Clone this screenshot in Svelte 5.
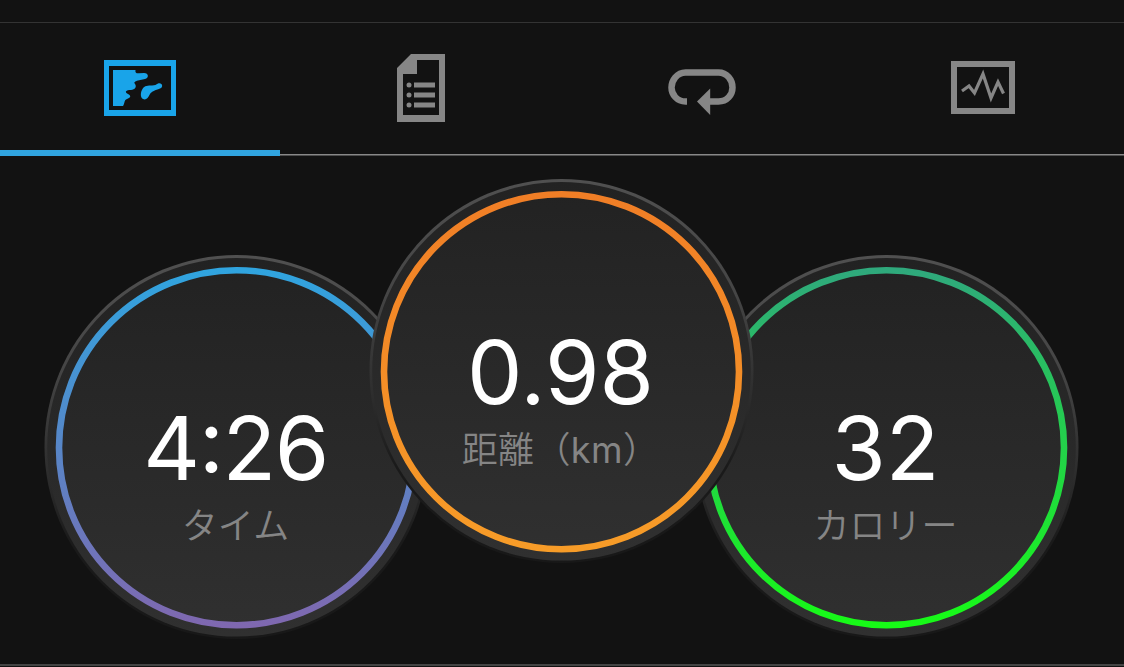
<script lang="ts">
	type Gauge = {
		id: string;
		value: string;
		label: string;
		from: string;
		to: string;
	};

	const tabs = ['map', 'details', 'laps', 'charts'];
	let activeTab = $state('map');

	const gauges: Gauge[] = [
		{ id: 'time', value: '4:26', label: 'タイム', from: '#30a4df', to: '#7f68b0' },
		{ id: 'distance', value: '0.98', label: '距離（km）', from: '#f07e26', to: '#f79c28' },
		{ id: 'calories', value: '32', label: 'カロリー', from: '#2fa97c', to: '#17fa17' }
	];

	// latin units and the colon are styled apart from the text around them
	function split(text: string, pattern: RegExp): string[] {
		return text.split(pattern).filter(Boolean);
	}
</script>

<div class="screen">
	<nav class="tabs">
		{#each tabs as tab (tab)}
			<button
				type="button"
				class="tab {tab}"
				class:active={activeTab === tab}
				aria-label={tab}
				onclick={() => (activeTab = tab)}
			>
				{#if tab === 'map'}
					<svg width="72" height="56" viewBox="0 0 72 56">
						<path d="M0 0h72v56H0zM5 6v44h62V6z" fill="currentColor" fill-rule="evenodd" />
						<path
							d="M9 10H31.500C31 12.500 32 13.500 35 13.300L40 13C45 13 45 18 41 19L34 20.500C31 21.500 29.500 22 31 24C33 27 31 29.500 27 30C22 30 20 32 24 34C28 36 26 38 23 39C20 40 21 43 19 46H9z"
							fill="currentColor"
						/>
						<path
							d="M54 23.500C58 22 60 27 56 28.500C51 30.500 48 31 46 34C44 38 42 40.500 39 39C36 37.500 36.500 32 38.500 29C40.500 25.500 44 25.500 48 25.500C51 25.500 52 24.500 54 23.500z"
							fill="currentColor"
						/>
					</svg>
				{:else if tab === 'details'}
					<svg width="48" height="68" viewBox="0 0 48 68">
						<path d="M14 0H48V68H0V14zM20 6V20H6V61H42V6z" fill="currentColor" fill-rule="evenodd" />
						<path d="M17 28.500h21v5H17zM17 38.500h21v5H17zM17 48.500h21v5H17z" fill="currentColor" />
						<circle cx="12" cy="31" r="2.500" fill="currentColor" />
						<circle cx="12" cy="41" r="2.500" fill="currentColor" />
						<circle cx="12" cy="51" r="2.500" fill="currentColor" />
					</svg>
				{:else if tab === 'laps'}
					<svg width="68" height="48" viewBox="0 0 68 48">
						<path
							d="M19 33.500H17.500C9 33.500 3.500 26.500 3.500 19.500S9 4.500 17.500 4.500H50.500C59 4.500 64.500 12 64.500 19.500S59 33.500 50.500 33.500H41"
							fill="none"
							stroke="currentColor"
							stroke-width="6.500"
						/>
						<path d="M29 33.500L42.200 20.500V47z" fill="currentColor" />
					</svg>
				{:else}
					<svg width="64" height="53" viewBox="0 0 64 53">
						<path d="M0 0h64v53H0zM6 6v41h52V6z" fill="currentColor" fill-rule="evenodd" />
						<path
							d="M11 30L18 25L23.500 32L32 13L40 37L47 21L52.500 32.500"
							fill="none"
							stroke="currentColor"
							stroke-width="3.200"
						/>
					</svg>
				{/if}
			</button>
		{/each}
	</nav>

	<main class="gauges">
		{#each gauges as gauge (gauge.id)}
			<section class="gauge {gauge.id}">
				<svg class="dial" width="386" height="386" viewBox="0 0 386 386">
					<defs>
						<linearGradient id="{gauge.id}-face" x1="0" y1="0" x2="0" y2="1">
							<stop offset="0" stop-color="#222" />
							<stop offset="1" stop-color="#303030" />
						</linearGradient>
						<linearGradient id="{gauge.id}-rim" x1="0" y1="0" x2="0" y2="1">
							<stop offset="0" stop-color="#505050" />
							<stop offset="0.3" stop-color="#454545" />
							<stop offset="0.6" stop-color="#2a2a2a" />
							<stop offset="0.75" stop-color="#1a1a1a" />
							<stop offset="1" stop-color="#181818" />
						</linearGradient>
						<linearGradient id="{gauge.id}-ring" x1="0" y1="0" x2="0" y2="1">
							<stop offset="0" stop-color={gauge.from} />
							<stop offset="1" stop-color={gauge.to} />
						</linearGradient>
					</defs>
					<circle cx="192.500" cy="192" r="192" fill="url(#{gauge.id}-rim)" />
					<circle cx="192.500" cy="192.300" r="189.300" fill="url(#{gauge.id}-face)" />
					<circle
						cx="192.500"
						cy="192.700"
						r="177.500"
						fill="none"
						stroke="url(#{gauge.id}-ring)"
						stroke-width="6.600"
					/>
				</svg>
				<div class="reading">
					<div class="value">
						{#each split(gauge.value, /(:)/) as part, i (i)}<span class:colon={part === ':'}>{part}</span>{/each}
					</div>
					<div class="label">
						{#each split(gauge.label, /([a-z]+)/) as part, i (i)}<span class:unit={/[a-z]/.test(part)}>{part}</span>{/each}
					</div>
				</div>
			</section>
		{/each}
	</main>
</div>

<style>
	:global(body) {
		background: #121212;
	}

	.screen {
		box-sizing: border-box;
		display: flex;
		flex-direction: column;
		width: 1124px;
		height: 667px;
		padding-top: 22px;
		overflow: hidden;
		background: #121212;
		font-family: Inter, 'Noto Sans CJK JP', sans-serif;
	}

	.tabs {
		box-sizing: border-box;
		display: grid;
		flex: none;
		grid-template-columns: repeat(4, 1fr);
		height: 134px;
		border-top: 1px solid #333;
		background: linear-gradient(#888, #888) 0 131px / 100% 1.5px no-repeat;
	}

	.tab {
		display: flex;
		align-items: center;
		justify-content: center;
		margin: 0;
		padding: 0 2px 4px 0;
		border: 0;
		background: none;
		color: #868686;
		cursor: pointer;
	}

	.tab.laps {
		padding: 4px 2px 0 0;
	}

	.tab.active {
		background: linear-gradient(#30a4df, #30a4df) 0 100% / 280px 6px no-repeat;
		color: #19a4e9;
	}

	.gauges {
		display: flex;
		flex: 1;
		justify-content: center;
		border-bottom: 2px solid #444;
		margin-bottom: 1px;
	}

	.gauge {
		display: grid;
		flex: none;
		width: 386px;
		height: 386px;
		margin-top: 99px;
	}

	.gauge.distance {
		z-index: 1;
		margin: 22.500px -61px 0;
	}

	.dial,
	.reading {
		grid-area: 1 / 1;
	}

	.reading {
		padding-top: 147px;
		padding-right: 3px;
		text-align: center;
		white-space: nowrap;
	}

	.value {
		height: 92px;
		color: #fff;
		font-size: 88px;
		font-weight: 400;
		line-height: 92px;
	}

	.time .value {
		letter-spacing: -1.5px;
	}

	.colon {
		display: inline-block;
		transform: translateY(-8px);
	}

	.label {
		margin-top: 7px;
		color: #858585;
		font-size: 36px;
		font-weight: 350;
		line-height: 50px;
	}

	.distance .label {
		letter-spacing: 0.4px;
	}

	.unit {
		font-weight: 400;
	}
</style>
